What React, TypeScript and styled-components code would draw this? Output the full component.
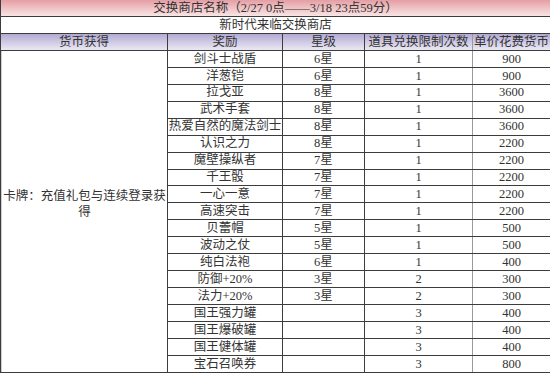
import React from "react";
import styled, { createGlobalStyle } from "styled-components";

type Item = {
  name: string;
  star: string;
  limit: string;
  price: string;
};

const items: Item[] = [
  { name: "剑斗士战盾", star: "6星", limit: "1", price: "900" },
  { name: "洋葱铠", star: "6星", limit: "1", price: "900" },
  { name: "拉戈亚", star: "8星", limit: "1", price: "3600" },
  { name: "武术手套", star: "8星", limit: "1", price: "3600" },
  { name: "热爱自然的魔法剑士", star: "8星", limit: "1", price: "3600" },
  { name: "认识之力", star: "8星", limit: "1", price: "2200" },
  { name: "魔壁操纵者", star: "7星", limit: "1", price: "2200" },
  { name: "千王骰", star: "7星", limit: "1", price: "2200" },
  { name: "一心一意", star: "7星", limit: "1", price: "2200" },
  { name: "高速突击", star: "7星", limit: "1", price: "2200" },
  { name: "贝蕾帽", star: "5星", limit: "1", price: "500" },
  { name: "波动之仗", star: "5星", limit: "1", price: "500" },
  { name: "纯白法袍", star: "6星", limit: "1", price: "400" },
  { name: "防御+20%", star: "3星", limit: "2", price: "300" },
  { name: "法力+20%", star: "3星", limit: "2", price: "300" },
  { name: "国王强力罐", star: "", limit: "3", price: "400" },
  { name: "国王爆破罐", star: "", limit: "3", price: "400" },
  { name: "国王健体罐", star: "", limit: "3", price: "400" },
  { name: "宝石召唤券", star: "", limit: "3", price: "800" },
];

const headers = ["货币获得", "奖励", "星级", "道具兑换限制次数", "单价花费货币"];

const App = () => {
  return (
    <>
      <GlobalStyle />
      <Sheet>
        <TitleCell>交换商店名称（2/27 0点——3/18 23点59分）</TitleCell>
        <SubtitleCell>新时代来临交换商店</SubtitleCell>
        {headers.map((h, i) => (
          <HeaderCell key={h} $soft={i === 4}>
            {h}
          </HeaderCell>
        ))}
        <SourceCell>卡牌：充值礼包与连续登录获得</SourceCell>
        {items.map((item) => (
          <React.Fragment key={item.name}>
            <Cell>{item.name}</Cell>
            <Cell>{item.star}</Cell>
            <Cell>{item.limit}</Cell>
            <Cell $soft>{item.price}</Cell>
          </React.Fragment>
        ))}
      </Sheet>
    </>
  );
};

export default App;

const GlobalStyle = createGlobalStyle`
  html, body {
    margin: 0;
    padding: 0;
    background: #ffffff;
  }
  body {
    font-family: "Liberation Serif", "Noto Sans CJK SC", serif;
    font-size: 12.5px;
    color: #333333;
  }
`;

const Sheet = styled.div`
  display: grid;
  grid-template-columns: 166px 114px 81px 107px 77px;
  grid-template-rows: repeat(22, 1fr);
  gap: 1px;
  width: 550px;
  height: 373px;
  box-sizing: border-box;
  padding: 0 1px 1px 1px;
  background: #3c3c3c;
`;

const Cell = styled.div<{ $soft?: boolean }>`
  display: flex;
  align-items: center;
  justify-content: center;
  background: #ffffff;
  white-space: nowrap;
  line-height: 1;
  box-shadow: ${(p) => (p.$soft ? "-1px 0 0 #9a9a9a" : "none")};
`;

const TitleCell = styled(Cell)`
  grid-column: 1 / -1;
  background: linear-gradient(to bottom, #e49ea4 0%, #f0c6c8 55%, #f8e4e4 100%);
`;

const SubtitleCell = styled(Cell)`
  grid-column: 1 / -1;
`;

const HeaderCell = styled(Cell)`
  background: linear-gradient(to bottom, #b3aad3 0%, #d2cde6 55%, #ebe8f4 100%);
`;

const SourceCell = styled(Cell)`
  grid-column: 1;
  grid-row: 4 / span 19;
  white-space: normal;
  text-align: center;
  line-height: 16px;
  padding: 0 0 14px 1px;
  box-shadow: inset 1px 0 0 #cfcfcf;
`;
